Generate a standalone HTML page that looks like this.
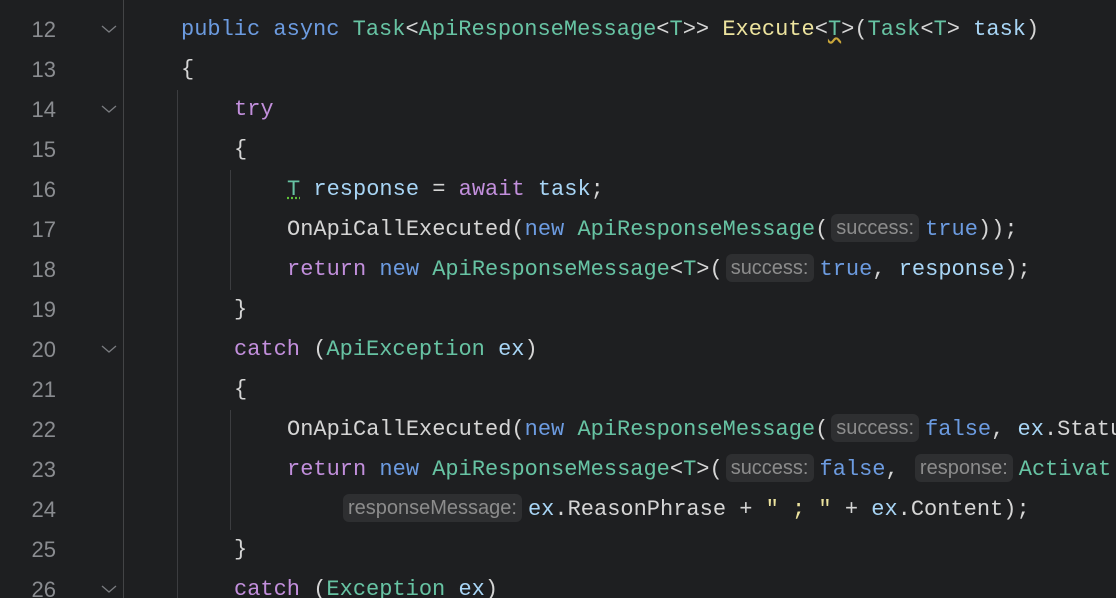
<!DOCTYPE html>
<html style="margin:0;overflow:hidden;width:1116px;height:598px"><head><meta charset="utf-8"><style>
body{margin:0;width:1116px;height:598px;background:#1e1f21;overflow:hidden;position:relative;font-family:"Liberation Mono",monospace;font-size:22px;color:#d5d5d5}
#w{position:absolute;left:0;top:0;width:1116px;height:598px;overflow:hidden}
.ln{position:absolute;left:0;width:56px;text-align:right;color:#8a8c90;height:40px;line-height:40px;font-size:22px;font-family:"Liberation Sans",sans-serif}
.l{position:absolute;height:40px;line-height:40px;white-space:pre}
.k{color:#6c9be0}.p{color:#c28fdc}.t{color:#67c3a3}.m{color:#ece39e}.v{color:#a8d5f5}
.h{display:inline-block;font-family:"Liberation Sans",sans-serif;font-size:20px;color:#8c8c8c;background:#2e2f31;border-radius:6px;height:28px;line-height:28px;padding:0 5px;margin:0 6px 0 3px;vertical-align:1px}
.g{position:absolute;width:1px;background:#3c3d40}
.f{position:absolute;left:101px;width:16px;height:10px}
</style></head><body><div id="w">
<div class="g" style="left:123px;top:0;height:598px;background:#434446"></div>
<div class="g" style="left:177px;top:90px;height:510px"></div>
<div class="g" style="left:230px;top:170px;height:120px"></div>
<div class="g" style="left:230px;top:410px;height:120px"></div>
<svg class="f" style="top:24px" viewBox="0 0 16 10"><path d="M1 2 L8 8 L15 2" stroke="#7a7c80" fill="none" stroke-width="1.3"/></svg>
<svg class="f" style="top:104px" viewBox="0 0 16 10"><path d="M1 2 L8 8 L15 2" stroke="#7a7c80" fill="none" stroke-width="1.3"/></svg>
<svg class="f" style="top:344px" viewBox="0 0 16 10"><path d="M1 2 L8 8 L15 2" stroke="#7a7c80" fill="none" stroke-width="1.3"/></svg>
<svg class="f" style="top:584px" viewBox="0 0 16 10"><path d="M1 2 L8 8 L15 2" stroke="#7a7c80" fill="none" stroke-width="1.3"/></svg>
<div class="ln" style="top:10px">12</div><div class="ln" style="top:50px">13</div><div class="ln" style="top:90px">14</div><div class="ln" style="top:130px">15</div><div class="ln" style="top:170px">16</div><div class="ln" style="top:210px">17</div><div class="ln" style="top:250px">18</div><div class="ln" style="top:290px">19</div><div class="ln" style="top:330px">20</div><div class="ln" style="top:370px">21</div><div class="ln" style="top:410px">22</div><div class="ln" style="top:450px">23</div><div class="ln" style="top:490px">24</div><div class="ln" style="top:530px">25</div><div class="ln" style="top:570px">26</div>
<div class="l" style="top:10px;left:181px"><span class="k">public async </span><span class="t">Task</span>&lt;<span class="t">ApiResponseMessage</span>&lt;<span class="t">T</span>&gt;&gt; <span class="m">Execute</span>&lt;<span class="t" style="text-decoration:underline wavy #c9a63a">T</span>&gt;(<span class="t">Task</span>&lt;<span class="t">T</span>&gt; <span class="v">task</span>)</div>
<div class="l" style="top:50px;left:181px">{</div>
<div class="l" style="top:90px;left:234px"><span class="p">try</span></div>
<div class="l" style="top:130px;left:234px">{</div>
<div class="l" style="top:170px;left:287px"><span class="t" style="text-decoration:underline dotted #5fc13a">T</span> <span class="v">response</span> = <span class="p">await</span> <span class="v">task</span>;</div>
<div class="l" style="top:210px;left:287px">OnApiCallExecuted(<span class="k">new</span> <span class="t">ApiResponseMessage</span>(<span class="h">success:</span><span class="k">true</span>));</div>
<div class="l" style="top:250px;left:287px"><span class="p">return</span> <span class="k">new</span> <span class="t">ApiResponseMessage</span>&lt;<span class="t">T</span>&gt;(<span class="h">success:</span><span class="k">true</span>, <span class="v">response</span>);</div>
<div class="l" style="top:290px;left:234px">}</div>
<div class="l" style="top:330px;left:234px"><span class="p">catch</span> (<span class="t">ApiException</span> <span class="v">ex</span>)</div>
<div class="l" style="top:370px;left:234px">{</div>
<div class="l" style="top:410px;left:287px">OnApiCallExecuted(<span class="k">new</span> <span class="t">ApiResponseMessage</span>(<span class="h">success:</span><span class="k">false</span>, <span class="v">ex</span>.Statu</div>
<div class="l" style="top:450px;left:287px"><span class="p">return</span> <span class="k">new</span> <span class="t">ApiResponseMessage</span>&lt;<span class="t">T</span>&gt;(<span class="h">success:</span><span class="k">false</span>, <span class="h">response:</span><span class="t">Activat</span></div>
<div class="l" style="top:490px;left:340px"><span class="h">responseMessage:</span><span class="v">ex</span>.ReasonPhrase + <span class="m">" ; "</span> + <span class="v">ex</span>.Content);</div>
<div class="l" style="top:530px;left:234px">}</div>
<div class="l" style="top:570px;left:234px"><span class="p">catch</span> (<span class="t">Exception</span> <span class="v">ex</span>)</div>
</div></body></html>
